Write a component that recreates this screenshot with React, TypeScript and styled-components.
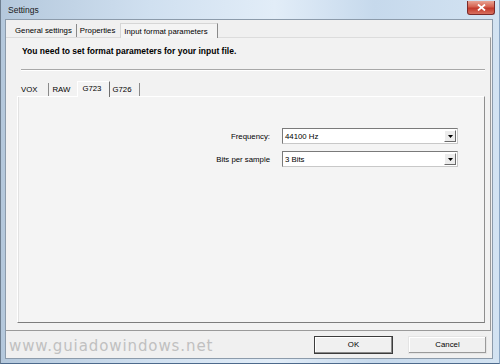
import styled, { createGlobalStyle } from "styled-components";

const GlobalStyle = createGlobalStyle`
  html, body {
    margin: 0;
    padding: 0;
    background: #ffffff;
  }
  body {
    font-family: "Liberation Sans", Tahoma, Arial, sans-serif;
    font-size: 7.8px;
    color: #000;
  }
`;

export default function App() {
  return (
    <>
      <GlobalStyle />
      <Window>
        <TitleBar>
          <Title>Settings</Title>
          <CloseButton aria-label="Close">
            <svg width="9" height="7" viewBox="0 0 9 7">
              <path d="M1 0.5 L8 6.5 M8 0.5 L1 6.5" stroke="#fff" strokeWidth="1.8" />
            </svg>
          </CloseButton>
        </TitleBar>
        <Client>
          <TabStrip>
            <Tab $pl={6} $pr={4}>General settings</Tab>
            <Tab $pl={3} $pr={5} $last>Properties</Tab>
            <ActiveTab>Input format parameters</ActiveTab>
          </TabStrip>
          <OuterPage>
            <Heading>You need to set format parameters for your input file.</Heading>
            <Divider />
            <InnerTabStrip>
              <InnerTab $pl={4} $pr={11}>VOX</InnerTab>
              <InnerTab $pl={3} $pr={7} $last>RAW</InnerTab>
              <InnerActiveTab>G723</InnerActiveTab>
              <InnerTab $pl={2} $pr={7}>G726</InnerTab>
            </InnerTabStrip>
            <InnerPanel>
              <Form>
                <Label>Frequency:</Label>
                <Select>
                  <SelectValue>44100 Hz</SelectValue>
                  <DropButton>
                    <svg width="5" height="3" viewBox="0 0 5 3">
                      <path d="M0 0 H5 L2.5 3 Z" fill="#000" />
                    </svg>
                  </DropButton>
                </Select>
                <Label>Bits per sample</Label>
                <Select>
                  <SelectValue>3 Bits</SelectValue>
                  <DropButton>
                    <svg width="5" height="3" viewBox="0 0 5 3">
                      <path d="M0 0 H5 L2.5 3 Z" fill="#000" />
                    </svg>
                  </DropButton>
                </Select>
              </Form>
            </InnerPanel>
          </OuterPage>
          <Footer>
            <Watermark>www.guiadowindows.net</Watermark>
            <Buttons>
              <Button $default>OK</Button>
              <Button>Cancel</Button>
            </Buttons>
          </Footer>
        </Client>
      </Window>
    </>
  );
}

const Window = styled.div`
  width: 500px;
  height: 364px;
  box-sizing: border-box;
  display: flex;
  flex-direction: column;
  padding: 0 6px 4px 4px;
  background: linear-gradient(90deg, #b4c8dc 0%, #d0e0f0 30%, #e2edf8 55%, #c6d9ec 75%, #d3e3f2 100%);
  border-left: 1px solid #6f7f90;
  border-bottom: 1px solid #4d6a8c;
  border-right: 1px solid #8aa6c4;
  overflow: hidden;
`;

const TitleBar = styled.div`
  height: 19px;
  display: flex;
  align-items: center;
  justify-content: space-between;
  padding-left: 3px;
  flex-shrink: 0;
`;

const Title = styled.span`
  font-size: 8.5px;
  color: #1a1a1a;
  padding-top: 1px;
`;

const CloseButton = styled.div`
  width: 26px;
  height: 13px;
  margin-right: -2px;
  margin-top: -4px;
  border-radius: 0 0 3px 3px;
  border: 1px solid #7a2a2a;
  border-top: none;
  background: linear-gradient(180deg, #e8a494 0%, #d5614f 45%, #c1392b 55%, #d8705f 100%);
  display: flex;
  align-items: center;
  justify-content: center;
`;

const Client = styled.div`
  flex: 1;
  display: flex;
  flex-direction: column;
  background: #f0f0f0;
  border: 1px solid #8c9bab;
  padding: 2px 0 0 0;
  min-height: 0;
`;

const TabStrip = styled.div`
  display: flex;
  align-items: flex-end;
  height: 15px;
  padding-left: 3px;
  flex-shrink: 0;
`;

const Tab = styled.div<{ $last?: boolean; $pl: number; $pr: number }>`
  height: 13px;
  display: flex;
  align-items: center;
  padding: 0 ${(p) => p.$pr}px 0 ${(p) => p.$pl}px;
  border-right: ${(p) => (p.$last ? "none" : "1px solid #8a8a8a")};
  white-space: nowrap;
`;

const ActiveTab = styled.div`
  height: 14px;
  display: flex;
  align-items: center;
  padding: 0 9px 0 3px;
  margin-bottom: -1px;
  background: #f4f4f4;
  border: 1px solid #d6d6d6;
  border-right: 1px solid #8a8a8a;
  border-bottom: none;
  white-space: nowrap;
  position: relative;
  z-index: 1;
`;

const OuterPage = styled.div`
  flex: 1;
  display: flex;
  flex-direction: column;
  background: #f2f2f2;
  border-top: 1px solid #dcdcdc;
  border-right: 1px solid #9a9a9a;
  border-bottom: 1px solid #9a9a9a;
  margin: 0 1px 0 0;
  padding: 7px 5px 7px 11px;
  min-height: 0;
`;

const Heading = styled.div`
  font-weight: bold;
  font-size: 8.5px;
  margin-left: 5px;
  line-height: 12px;
`;

const Divider = styled.div`
  height: 0;
  border-top: 1px solid #a8a8a8;
  border-bottom: 1px solid #ffffff;
  margin: 12px 0 0 4px;
`;

const InnerTabStrip = styled.div`
  display: flex;
  align-items: flex-end;
  height: 16px;
  margin-top: 9px;
  flex-shrink: 0;
`;

const InnerTab = styled.div<{ $last?: boolean; $pl: number; $pr: number }>`
  height: 13px;
  display: flex;
  align-items: center;
  padding: 0 ${(p) => p.$pr}px 0 ${(p) => p.$pl}px;
  border-right: ${(p) => (p.$last ? "none" : "1px solid #8a8a8a")};
  white-space: nowrap;
`;

const InnerActiveTab = styled.div`
  height: 16px;
  display: flex;
  align-items: flex-start;
  padding: 2px 8px 0 4px;
  box-sizing: border-box;
  margin-bottom: -1px;
  background: #f4f4f4;
  border-left: 1px solid #ffffff;
  border-top: 1px solid #ffffff;
  border-right: 1px solid #6e6e6e;
  white-space: nowrap;
  position: relative;
  z-index: 1;
`;

const InnerPanel = styled.div`
  flex: 1;
  background: #f4f4f4;
  border-top: 1px solid #ffffff;
  border-left: 1px solid #ffffff;
  border-right: 1px solid #8e8e8e;
  border-bottom: 1px solid #7c7c7c;
  box-shadow: inset 1px 0 0 #e2e2e2;
  padding: 31px 26px 0 0;
`;

const Form = styled.div`
  display: grid;
  grid-template-columns: 1fr 176px;
  column-gap: 12px;
  row-gap: 7px;
  align-items: center;
`;

const Label = styled.div`
  text-align: right;
  white-space: nowrap;
`;

const Select = styled.div`
  height: 16px;
  box-sizing: border-box;
  display: flex;
  align-items: center;
  justify-content: space-between;
  background: #ffffff;
  border: 1px solid #7a7a7a;
  border-right-color: #c8c8c8;
  border-bottom-color: #c8c8c8;
  padding: 0 1px 0 2px;
`;

const SelectValue = styled.span`
  padding-top: 1px;
`;

const DropButton = styled.div`
  width: 12px;
  height: 12px;
  box-sizing: border-box;
  display: flex;
  align-items: center;
  justify-content: center;
  background: #ececec;
  border: 1px solid #ffffff;
  border-right-color: #6a6a6a;
  border-bottom-color: #6a6a6a;
`;

const Footer = styled.div`
  height: 27px;
  display: flex;
  align-items: center;
  justify-content: space-between;
  padding: 0 5px 0 3px;
  flex-shrink: 0;
`;

const Watermark = styled.div`
  font-family: "DejaVu Sans", sans-serif;
  font-size: 15px;
  letter-spacing: 0.9px;
  color: #c0c0c0;
  padding-top: 2px;
`;

const Buttons = styled.div`
  display: flex;
  gap: 15px;
`;

const Button = styled.div<{ $default?: boolean }>`
  width: 79px;
  height: 18px;
  box-sizing: border-box;
  display: flex;
  align-items: center;
  justify-content: center;
  background: #f0f0f0;
  border: 1px solid ${(p) => (p.$default ? "#3c3c3c" : "#e4e4e4")};
  box-shadow: ${(p) =>
    p.$default
      ? "inset -1px -1px 0 #8a8a8a, inset 1px 1px 0 #ffffff"
      : "inset -1px -1px 0 #9a9a9a, inset 1px 1px 0 #ffffff"};
`;
